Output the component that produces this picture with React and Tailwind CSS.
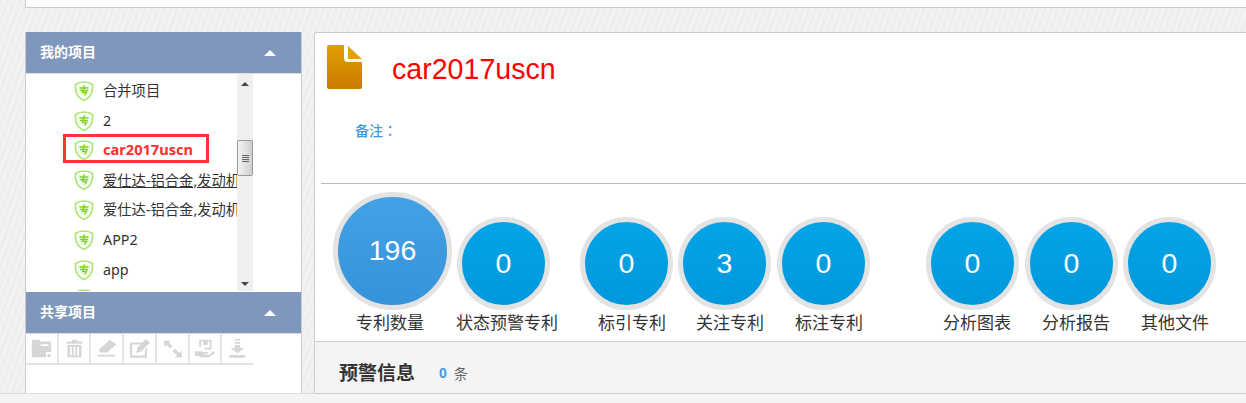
import React from 'react'

const cjk = "font-['Noto_Sans','Noto_Sans_CJK_SC',sans-serif]"

const projects = [
  { id: 1, name: '合并项目' },
  { id: 2, name: '2' },
  { id: 3, name: 'car2017uscn', active: true },
  { id: 4, name: '爱仕达-铝合金,发动机', underline: true },
  { id: 5, name: '爱仕达-铝合金,发动机' },
  { id: 6, name: 'APP2' },
  { id: 7, name: 'app' },
  { id: 8, name: '' },
]

const stats = [
  { value: 196, label: '专利数量', big: true, item: 'w-[124px]', text: 'ml-[23px]' },
  { value: 0, label: '状态预警专利', item: 'w-[123px]', text: '-ml-px' },
  { value: 0, label: '标引专利', item: 'w-[98px]', text: 'ml-[18px]' },
  { value: 3, label: '关注专利', item: 'w-[99px]', text: 'ml-[18px]' },
  { value: 0, label: '标注专利', item: 'w-[149px]', text: 'ml-[18px]' },
  { value: 0, label: '分析图表', item: 'w-[99px]', text: 'ml-[17px]' },
  { value: 0, label: '分析报告', item: 'w-[98px]', text: 'ml-[17px]' },
  { value: 0, label: '其他文件', item: 'w-[93px]', text: 'ml-[18px]' },
]

const Shield = () => (
  <svg width="20" height="20" viewBox="0 0 20 20" className="shrink-0">
    <path d="M10 1 Q15 1 18.5 3.5 Q19 11 16 15 Q13.5 18 10 19.5 Q6.5 18 4 15 Q1 11 1.5 3.5 Q5 1 10 1 Z" fill="#fff" stroke="#a8e66f" strokeWidth="1.6" />
    <circle cx="10" cy="9.5" r="6" fill="#f1fbe6" />
    <path d="M5.5 7 H14.5 M6 9.5 H14 M10.4 4.5 L8.6 11.5 H12.5 L10.6 14.5" fill="none" stroke="#80d12e" strokeWidth="1.4" />
  </svg>
)

const Caret = () => (
  <span className="h-0 w-0 border-x-[6px] border-b-[6px] border-x-transparent border-b-white" />
)

const PanelHeader = ({ title }) => (
  <div className="flex h-[41px] items-center justify-between bg-[#7f97bc] pl-[14px] pr-[25px]">
    <span className={`${cjk} pb-[2px] text-[14px] font-bold text-white`}>{title}</span>
    <Caret />
  </div>
)

const Scrollbar = () => (
  <div className="flex w-[16px] shrink-0 flex-col items-center bg-[#f0f0f0]">
    <span className="mt-[8px] h-0 w-0 border-x-[4px] border-b-[4px] border-x-transparent border-b-[#444]" />
    <div className="mt-[54px] flex h-[36px] w-[16px] flex-col items-center justify-center gap-[1px] rounded-[2px] border border-[#999] bg-gradient-to-r from-[#f4f4f4] to-[#cfcfcf]">
      <span className="h-px w-[7px] bg-[#666]" />
      <span className="h-px w-[7px] bg-[#666]" />
      <span className="h-px w-[7px] bg-[#666]" />
      <span className="h-px w-[7px] bg-[#666]" />
    </div>
    <span className="mt-auto mb-[5px] h-0 w-0 border-x-[4px] border-t-[4px] border-x-transparent border-t-[#444]" />
  </div>
)

const tools = [
  <g key="a">
    <path d="M1 2 H9 L11 4 H23 V16 H17 V22 H1 Z M11 7 V9 H20 V7 Z" fillRule="evenodd" />
    <circle cx="20.5" cy="20" r="2" />
  </g>,
  <path key="b" d="M9 2 H15 V4 H21 V6.5 H3 V4 H9 Z M4 8 H20 V22 H4 Z M7 10 V20 H9 V10 Z M11 10 V20 H13 V10 Z M15 10 V20 H17 V10 Z" fillRule="evenodd" />,
  <path key="c" d="M16 2 L23 7.5 L13 16.5 H5 L3 13.5 Z M2 19 H22 V21 H2 Z" />,
  <path key="d" d="M1 5 H15 L13 7.5 H3.5 V20 H18 V13 L20.5 10.5 V22.5 H1 Z M19 1 L24 5 L14 15.5 L8 17 L9.5 11 Z" />,
  <path key="e" d="M2 3 H10 L8 5.5 L12 9 L9 12 L5.5 8 L3 10.5 Z M23 22 H15 L17 19.5 L12 15 L15 12 L19.5 17 L22 14.5 Z" />,
  <path key="f" d="M6 2 H20 V13 H12 V11 H18 V4 H15.5 V8 H10.5 V4 H8 V10 H6 Z M1 15 H8 L11 16 H16 V18 H11 V19 H17 L22 15.5 H23.5 V17.5 L17 22 H7 L5 20.5 H1 Z" />,
  <path key="g" d="M9 1 H15 V3 H9 Z M9 4.5 H15 V6.5 H9 Z M9 8 H15 V11.5 H20 L12 17.5 L4 11.5 H9 Z M3 19.5 H21 V22.5 H3 Z" />,
]

const Toolbar = () => (
  <div className="flex h-[31px] w-[227px] border-b-[2px] border-[#e2e2e2]">
    {tools.map((t, i) => (
      <div key={t.key} className={`flex h-[29px] flex-1 items-center justify-center border-[#e6e6e6] ${i < tools.length - 1 ? 'border-r-2' : ''}`}>
        <svg width="21" height="21" viewBox="0 0 24 24" fill="#d6d6d6">{t}</svg>
      </div>
    ))}
  </div>
)

const Stat = ({ value, label, big, item, text }) => (
  <div className={`flex flex-col items-start ${item}`}>
    <div className={`flex items-center justify-center rounded-full border-[5px] border-[#e3e3e3] bg-gradient-to-b font-['Liberation_Sans',sans-serif] text-[28.5px] text-white ${big ? 'h-[118px] w-[119px] from-[#43a1e5] to-[#3593d9] pb-[2px]' : 'h-[93px] w-[93px] from-[#04a4e6] to-[#0098dc]'}`}>
      {value}
    </div>
    <span className={`${cjk} mt-[1px] whitespace-nowrap text-[17px] leading-[24px] text-[#333] ${text}`}>{label}</span>
  </div>
)

const App = () => (
  <div className="h-[403px] w-[1246px] overflow-hidden bg-[#eeeff1] bg-[repeating-linear-gradient(110deg,#edeef0_0,#edeef0_3px,#f2f3f4_3px,#f2f3f4_6px)]">
    <div className="ml-[25px] h-[8px] border-b border-l border-[#ccc] bg-white" />
    <div className="ml-[25px] mt-[24px] flex h-[361px] gap-[12px]">
      <aside className="flex w-[277px] shrink-0 flex-col border-x border-[#ccc] bg-white">
        <PanelHeader title="我的项目" />
        <div className="flex h-[218px] border-t border-[#ddd]">
          <ul className="w-[211px] overflow-hidden pt-[2px]">
            {projects.map((p) => (
              <li key={p.id} className={`flex h-[29.8px] items-center ${cjk} text-[14.3px] text-[#333] ${p.active ? 'pl-[37px]' : 'pl-[48px]'}`}>
                {p.active ? (
                  <div className="-mt-[4px] flex h-[29px] w-[146px] shrink-0 items-center border-[3px] border-[#fb3535] pl-[8px] pt-[3px]">
                    <Shield />
                    <span className="ml-[9px] whitespace-nowrap text-[14.6px] font-bold text-[#ff2d2d]">{p.name}</span>
                  </div>
                ) : (
                  <>
                    <Shield />
                    <span className={`ml-[9px] overflow-hidden whitespace-nowrap ${p.underline ? 'underline' : ''}`}>{p.name}</span>
                  </>
                )}
              </li>
            ))}
          </ul>
          <Scrollbar />
        </div>
        <div className="mt-px">
          <PanelHeader title="共享项目" />
        </div>
        <div className="border-t border-[#ddd]">
          <Toolbar />
        </div>
      </aside>
      <main className="min-w-0 flex-1 rounded-tl-[3px] border-l border-t border-[#ccc] bg-white">
        <div className="flex h-[150px] flex-col pl-[12px]">
          <div className="flex items-start pt-[12px]">
            <svg width="35" height="44" viewBox="0 0 35 44" className="shrink-0">
              <defs>
                <linearGradient id="file" x1="0" y1="0" x2="0" y2="1">
                  <stop offset="0" stopColor="#e0a000" />
                  <stop offset="1" stopColor="#c97b00" />
                </linearGradient>
              </defs>
              <path d="M2 0 H17 V13 Q17 17 21 17 H35 V42 Q35 44 33 44 H2 Q0 44 0 42 V2 Q0 0 2 0 Z" fill="url(#file)" />
              <path d="M21 1 L35 14 H21 Z" fill="#dfa312" />
            </svg>
            <h1 className="ml-[30px] mt-[4px] font-['Liberation_Sans',sans-serif] text-[28.6px] leading-[40px] text-[#ff0000]">car2017uscn</h1>
          </div>
          <p className={`${cjk} ml-[28px] mt-[31px] text-[14px] font-medium leading-[20px] text-[#3f9ae0]`}>
            备注<span className="font-['Noto_Sans_CJK_TC',sans-serif]">：</span>
          </p>
        </div>
        <div className="ml-[6px] border-t border-[#bbb]" />
        <div className="flex h-[157px] items-end pb-[6px] pl-[18px]">
          {stats.map((s) => (
            <Stat key={s.label} {...s} />
          ))}
        </div>
        <div className="flex h-[53px] items-center border-y border-[#ccc] bg-[#f4f4f4] pl-[24px] pt-[12px]">
          <span className={`${cjk} text-[19px] font-bold text-[#333]`}>预警信息</span>
          <span className="ml-[24px] font-['Liberation_Sans',sans-serif] text-[14px] font-bold text-[#3f9ae0]">0</span>
          <span className={`${cjk} ml-[7px] text-[14px] text-[#666]`}>条</span>
        </div>
      </main>
    </div>
    <div className="h-[10px] border-t border-[#ddd] bg-[#f4f4f4]" />
  </div>
)

export default App
